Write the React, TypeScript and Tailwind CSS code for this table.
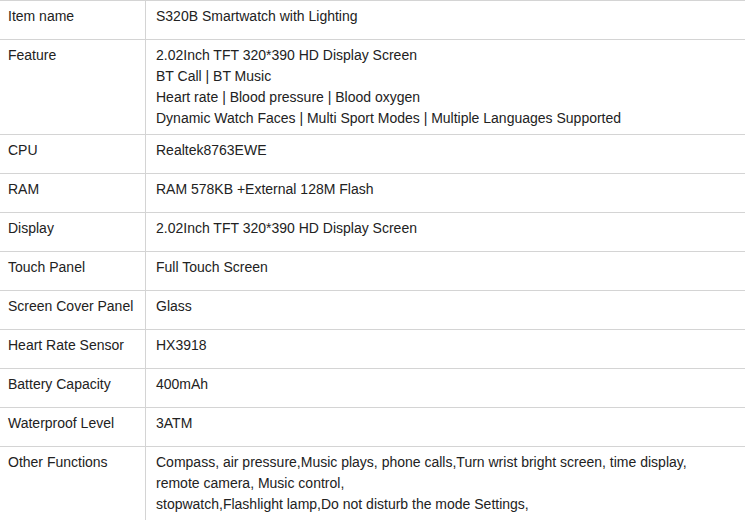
import React from "react";

const rows: [string, string[]][] = [
  ["Item name", ["S320B Smartwatch with Lighting"]],
  [
    "Feature",
    [
      "2.02Inch TFT 320*390 HD Display Screen",
      "BT Call | BT Music",
      "Heart rate | Blood pressure | Blood oxygen",
      "Dynamic Watch Faces | Multi Sport Modes | Multiple Languages Supported",
    ],
  ],
  ["CPU", ["Realtek8763EWE"]],
  ["RAM", ["RAM 578KB +External 128M Flash"]],
  ["Display", ["2.02Inch TFT 320*390 HD Display Screen"]],
  ["Touch Panel", ["Full Touch Screen"]],
  ["Screen Cover Panel", ["Glass"]],
  ["Heart Rate Sensor", ["HX3918"]],
  ["Battery Capacity", ["400mAh"]],
  ["Waterproof Level", ["3ATM"]],
  [
    "Other Functions",
    [
      "Compass, air pressure,Music plays, phone calls,Turn wrist bright screen, time display,",
      "remote camera, Music control,",
      "stopwatch,Flashlight lamp,Do not disturb the mode Settings,",
    ],
  ],
];

export default function App() {
  return (
    <div
      className="w-[745px] h-[520px] overflow-hidden bg-white text-[#222222] text-[14px] leading-[21px]"
      style={{ fontFamily: '"Liberation Sans", Arial, sans-serif' }}
    >
      <div className="border-t border-[#d4d4d4]">
        {rows.map(([label, lines]) => (
          <div
            key={label}
            className="grid grid-cols-[146px_1fr] border-b border-[#d4d4d4]"
          >
            <div className="pl-[8px] pt-[5px] pb-[5px] min-h-[38px] border-r border-[#d4d4d4]">
              {label}
            </div>
            <div className="pl-[10px] pt-[5px] pb-[5px] min-h-[38px] whitespace-nowrap">
              {lines.map((l, i) => (
                <div key={i}>{l}</div>
              ))}
            </div>
          </div>
        ))}
      </div>
    </div>
  );
}
